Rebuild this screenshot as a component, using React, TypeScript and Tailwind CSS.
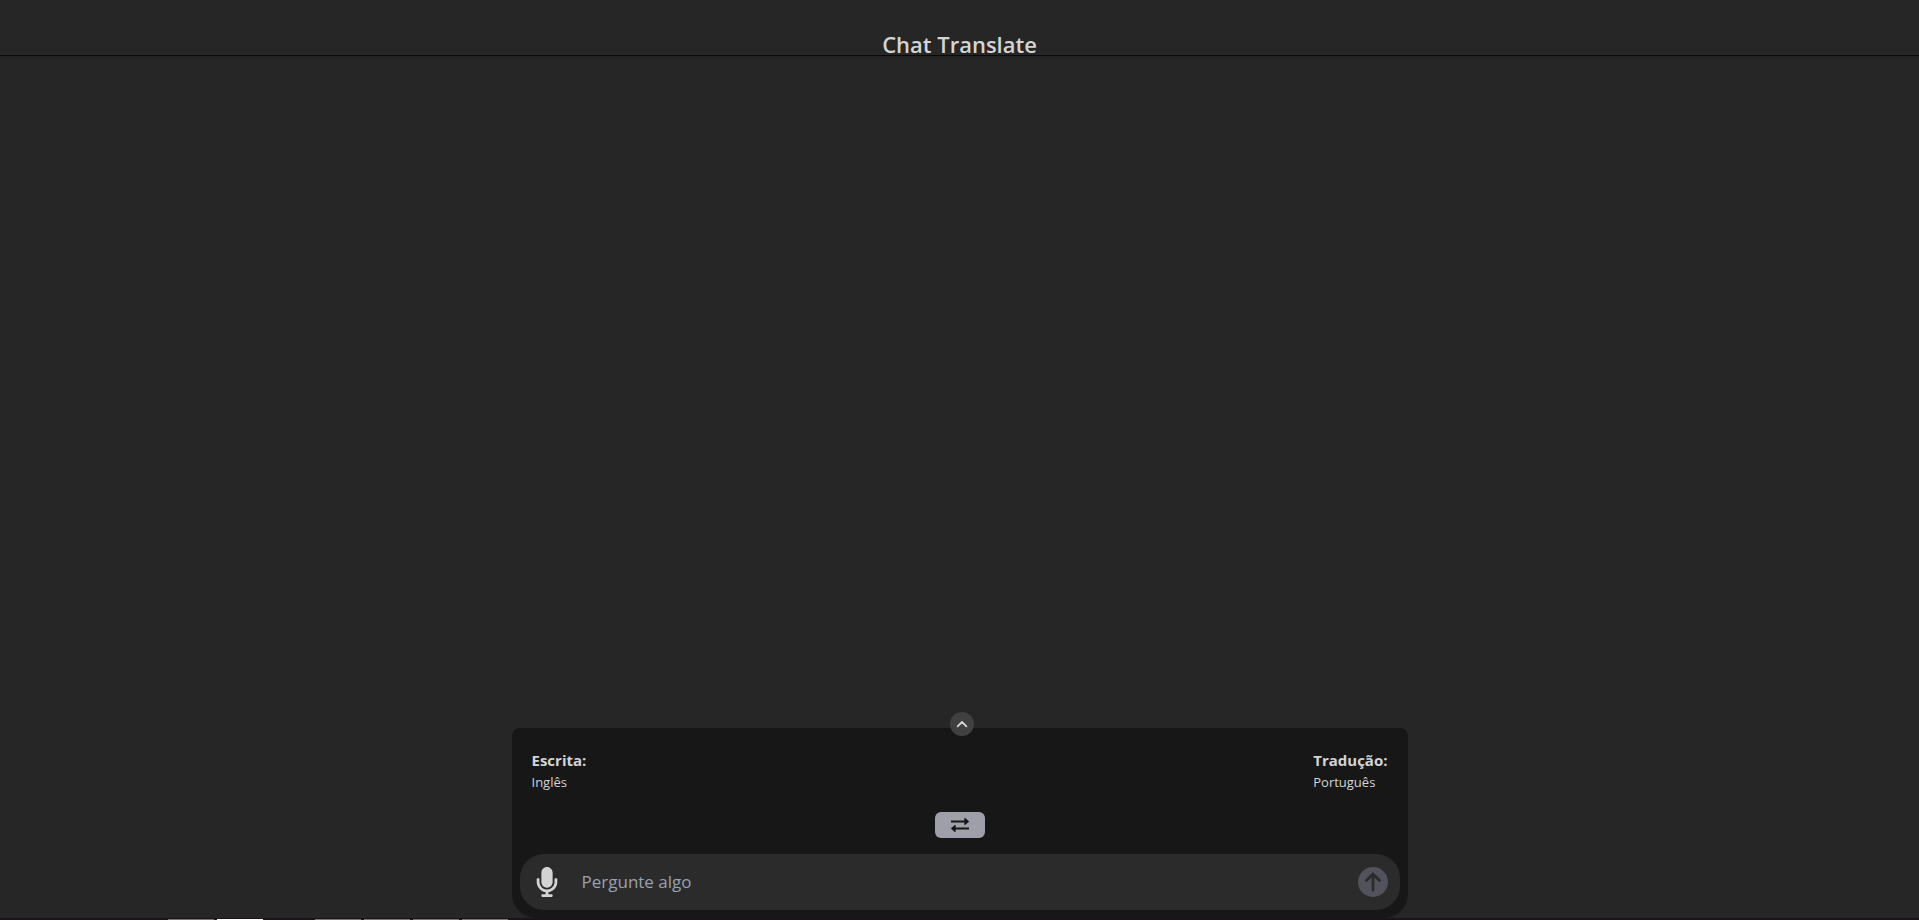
import { FaMicrophone } from "react-icons/fa";
import { FaCircleArrowUp } from "react-icons/fa6";

function SwapIcon() {
  return (
    <svg viewBox="0 0 18 14" className="h-[14px] w-[18px]" fill="none" stroke="currentColor" strokeWidth="2" aria-hidden="true">
      <path d="M0 3.5h15M18 10.5H3" />
      <path d="M14 .8v5.4l3.2-2.7zM4 7.8v5.4L.8 10.5z" fill="currentColor" strokeWidth="1.4" strokeLinejoin="round" />
    </svg>
  );
}

function ChevronIcon() {
  return (
    <svg viewBox="0 0 12 12" className="size-3" fill="none" stroke="currentColor" strokeWidth="1.8" strokeLinecap="round" strokeLinejoin="round" aria-hidden="true">
      <path d="M1.6 8.4 6 4l4.4 4.4" />
    </svg>
  );
}

const taskbarItems = [
  "bg-[#7d7278]",
  "bg-white",
  "bg-transparent",
  "bg-[#7d7278]",
  "bg-[#7d7278]",
  "bg-[#7d7278]",
  "bg-[#7d7278]",
];

export default function App() {
  return (
    <div className="flex h-screen flex-col overflow-hidden bg-[#262626] font-['Open_Sans','Noto_Sans',sans-serif] text-[#d4d4d4]">
      <header className="flex h-14 shrink-0 items-end justify-center border-b border-[#0a0a0a] shadow-sm">
        <h1 className="text-[22px] leading-[22px] font-semibold">Chat Translate</h1>
      </header>
      <main className="flex flex-1 flex-col items-center justify-end">
        <section className="relative flex w-full max-w-4xl flex-col rounded-t-lg rounded-b-3xl bg-[#171717] p-2">
          <button
            type="button"
            aria-label="Expandir"
            className="absolute -top-4 left-1/2 ml-[-10px] flex size-6 items-center justify-center rounded-full bg-[#404040]"
          >
            <ChevronIcon />
          </button>
          <div className="flex justify-between px-3 pt-3">
            <div>
              <h2 className="text-[15px] leading-6 font-bold">Escrita:</h2>
              <p className="text-[13px] leading-5">Inglês</p>
            </div>
            <div>
              <h2 className="text-[15px] leading-6 font-bold">Tradução:</h2>
              <p className="text-[13px] leading-5">Português</p>
            </div>
          </div>
          <button
            type="button"
            aria-label="Trocar idiomas"
            className="mt-5 mb-4 flex h-[26px] w-[50px] items-center justify-center self-center rounded-md bg-[#9f9fa9] text-[#171717]"
          >
            <SwapIcon />
          </button>
          <form className="flex h-14 items-center rounded-3xl bg-[#2b2b2b] px-3" onSubmit={(e) => e.preventDefault()}>
            <button type="button" aria-label="Gravar" className="flex size-[30px] items-center justify-center">
              <FaMicrophone className="size-[30px]" />
            </button>
            <input
              type="text"
              aria-label="Pergunte algo"
              placeholder="Pergunte algo"
              className="ml-5 min-w-0 flex-1 bg-transparent text-[17px] outline-none placeholder:text-[#99a1af]"
            />
            <button type="submit" aria-label="Enviar" className="text-[#52525c]">
              <FaCircleArrowUp className="size-[30px]" />
            </button>
          </form>
        </section>
      </main>
      <footer className="flex h-[2px] shrink-0 items-end gap-[3px] bg-[#1e121b] pl-[168px]">
        {taskbarItems.map((color, i) => (
          <span key={i} className={`h-px w-[46px] ${color}`} />
        ))}
      </footer>
    </div>
  );
}
